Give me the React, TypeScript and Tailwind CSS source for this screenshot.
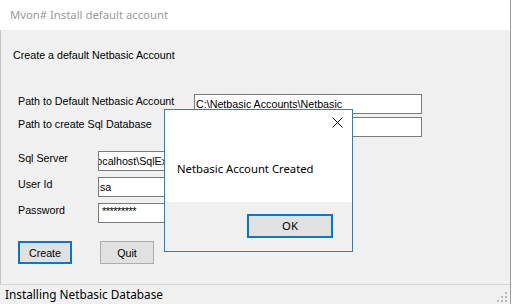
export default function App() {
  const ui = { fontFamily: '"Noto Sans", "Open Sans", sans-serif' }
  const ms = { fontFamily: '"Liberation Sans", Arial, sans-serif' }

  return (
    <div className="w-[512px] h-[304px] bg-white overflow-hidden">
      <div className="relative w-[511px] h-[304px] flex flex-col bg-[#f0f0f0] border-r border-[#9c9c9c]">
        {/* Title bar */}
        <div className="h-[30px] shrink-0 bg-white flex items-center pl-[10px]">
          <span className="text-[11.3px] text-[#9a9a9a]" style={ui}>
            Mvon# Install default account
          </span>
        </div>

        {/* Form */}
        <div className="flex-1 flex flex-col pl-[12px] pt-[18px] border-l border-[#c4c4c4] text-[10.7px] leading-[14px] text-black" style={ms}>
          <div>Create a default Netbasic Account</div>

          <div className="mt-[32px] ml-[5px] flex flex-col gap-[3px]">
            <div className="flex h-[20px]">
              <div className="w-[176px]">Path to Default Netbasic Account</div>
              <div className="w-[228px] h-[20px] border border-[#7a7a7a] bg-white pl-[1px] flex items-center whitespace-nowrap overflow-hidden">
                C:\Netbasic Accounts\Netbasic
              </div>
            </div>
            <div className="flex h-[20px]">
              <div className="w-[176px]">Path to create Sql Database</div>
              <div className="w-[228px] h-[20px] border border-[#7a7a7a] bg-white pl-[1px] flex items-center whitespace-nowrap overflow-hidden">
                C:\Netbasic Accounts\Database
              </div>
            </div>
          </div>

          <div className="mt-[14px] ml-[5px] flex flex-col gap-[6px]">
            <div className="flex h-[20px]">
              <div className="w-[80px]">Sql Server</div>
              <div className="w-[180px] h-[20px] border border-[#7a7a7a] bg-white flex items-center whitespace-nowrap overflow-hidden">
                <span className="ml-[-5px]">localhost\SqlExpress</span>
              </div>
            </div>
            <div className="flex h-[20px]">
              <div className="w-[80px]">User Id</div>
              <div className="w-[180px] h-[20px] border border-[#7a7a7a] bg-white pl-[1px] flex items-center">
                sa
              </div>
            </div>
            <div className="flex h-[20px]">
              <div className="w-[80px]">Password</div>
              <div className="w-[180px] h-[20px] border border-[#7a7a7a] bg-white pl-[3px] flex items-start pt-[2px]">
                <span className="text-[11px] tracking-[-0.5px] leading-[10px]">*********</span>
              </div>
            </div>
          </div>

          <div className="mt-[18px] ml-[5px] flex gap-[28px]">
            <button className="w-[54px] h-[23px] border-2 border-[#0078d7] bg-[#e1e1e1] flex items-center justify-center">
              Create
            </button>
            <button className="w-[54px] h-[23px] border border-[#adadad] bg-[#e1e1e1] flex items-center justify-center">
              Quit
            </button>
          </div>
        </div>

        {/* Status bar */}
        <div className="h-[20px] shrink-0 border-t border-[#d7d7d7] flex items-center pl-[5px] relative">
          <span className="text-[11.8px] text-black" style={ui}>
            Installing Netbasic Database
          </span>
          <svg className="absolute right-[3px] bottom-[2px]" width="10" height="10" viewBox="0 0 10 10">
            <rect x="8" y="0" width="2" height="2" fill="#b8b8b8" />
            <rect x="4" y="4" width="2" height="2" fill="#b8b8b8" />
            <rect x="8" y="4" width="2" height="2" fill="#b8b8b8" />
            <rect x="0" y="8" width="2" height="2" fill="#b8b8b8" />
            <rect x="4" y="8" width="2" height="2" fill="#b8b8b8" />
            <rect x="8" y="8" width="2" height="2" fill="#b8b8b8" />
          </svg>
        </div>

        {/* Message box */}
        <div className="absolute left-[164px] top-[109px] w-[189px] h-[143px] border border-[#1883d7] bg-[#f0f0f0] flex flex-col">
          <div className="h-[92px] bg-white relative flex flex-col">
            <svg className="absolute left-[167px] top-[7px]" width="11" height="11" viewBox="0 0 11 11">
              <path d="M0.5 0.5 L10.5 10.5 M10.5 0.5 L0.5 10.5" stroke="#000" strokeWidth="1" />
            </svg>
            <div className="mt-[51px] ml-[12px] text-[11.3px] leading-[16px] text-black" style={ui}>
              Netbasic Account Created
            </div>
          </div>
          <div className="flex-1 flex justify-end pr-[19px] pt-[12px]">
            <button className="w-[86px] h-[24px] border-2 border-[#0078d7] bg-[#e1e1e1] flex items-center justify-center text-[11.3px] text-black" style={ui}>
              OK
            </button>
          </div>
        </div>
      </div>
    </div>
  )
}
